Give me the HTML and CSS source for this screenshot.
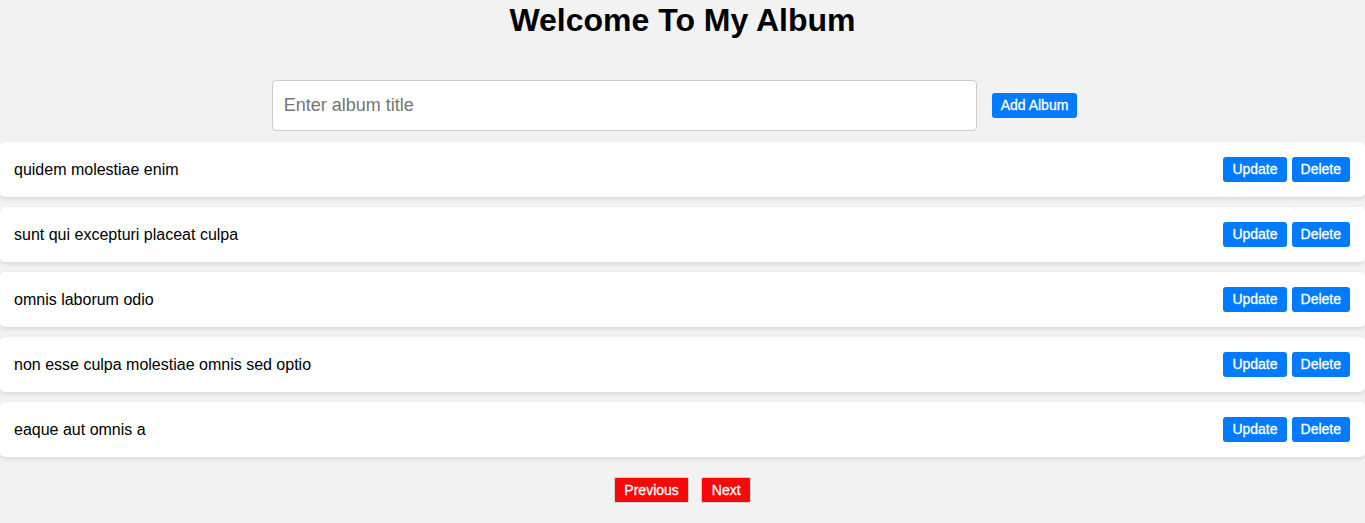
FILE: index.html
```html
<!DOCTYPE html>
<html>
<head>
<meta charset="utf-8">
<link rel="stylesheet" href="styles.css">
</head>
<body>
<h1 class="title">Welcome To My Album</h1>
<div class="add-form">
  <input class="title-input" type="text" placeholder="Enter album title">
  <button class="btn blue add-btn">Add Album</button>
</div>
<ul class="list">
  <li class="row"><span class="row-text">quidem molestiae enim</span><div class="actions"><button class="btn blue">Update</button><button class="btn blue">Delete</button></div></li>
  <li class="row"><span class="row-text">sunt qui excepturi placeat culpa</span><div class="actions"><button class="btn blue">Update</button><button class="btn blue">Delete</button></div></li>
  <li class="row"><span class="row-text">omnis laborum odio</span><div class="actions"><button class="btn blue">Update</button><button class="btn blue">Delete</button></div></li>
  <li class="row"><span class="row-text">non esse culpa molestiae omnis sed optio</span><div class="actions"><button class="btn blue">Update</button><button class="btn blue">Delete</button></div></li>
  <li class="row"><span class="row-text">eaque aut omnis a</span><div class="actions"><button class="btn blue">Update</button><button class="btn blue">Delete</button></div></li>
</ul>
<div class="pager">
  <button class="btn red">Previous</button>
  <button class="btn red">Next</button>
</div>
</body>
</html>
```
FILE: styles.css
```css
html, body {
  margin: 0;
  padding: 0;
  background: #f2f2f2;
  font-family: "Liberation Sans", Arial, sans-serif;
  color: #000;
}
.title {
  margin: 2px 0 0 0;
  font-size: 32px;
  font-weight: bold;
  text-align: center;
  line-height: 37px;
}
.add-form {
  display: flex;
  justify-content: center;
  align-items: center;
  gap: 15px;
  margin-top: 41px;
  padding-right: 16px;
}
.title-input {
  box-sizing: border-box;
  width: 705px;
  height: 51px;
  border: 1px solid #ccc;
  border-radius: 4px;
  padding: 0 11px;
  font-family: "Liberation Sans", Arial, sans-serif;
  font-size: 18px;
  background: #fff;
  outline: none;
}
.title-input::placeholder {
  color: #757575;
}
.btn {
  font-family: "Liberation Sans", Arial, sans-serif;
  font-size: 14px;
  font-weight: normal;
  line-height: 17px;
  color: #fff;
  -webkit-text-stroke: 0.3px #fff;
  border: none;
  border-radius: 3px;
  padding: 4px 9px;
  cursor: pointer;
}
.blue {
  background: #007bff;
}
.add-btn {
  padding: 4px 9px;
}
.red {
  background: #f80808;
  border: 1px solid #cfcfcf;
  line-height: 16px;
  padding: 4px 9.5px;
  border-radius: 2px;
}
.list {
  list-style: none;
  margin: 11px 0 0 0;
  padding: 0;
  display: flex;
  flex-direction: column;
  gap: 10px;
}
.row {
  display: flex;
  align-items: center;
  justify-content: space-between;
  height: 55px;
  box-sizing: border-box;
  padding: 0 15px 0 14px;
  background: #fff;
  border-radius: 5px;
  box-shadow: 0 2px 4px rgba(0, 0, 0, 0.1);
  font-size: 16px;
}
.actions {
  display: flex;
  gap: 5px;
}
.pager {
  display: flex;
  justify-content: center;
  gap: 12px;
  margin-top: 20px;
}
```
